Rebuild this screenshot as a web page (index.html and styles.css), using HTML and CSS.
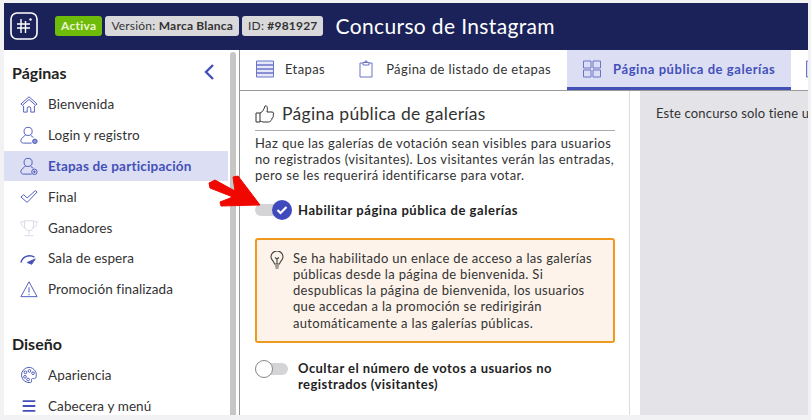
FILE: index.html
```html
<!DOCTYPE html>
<html lang="en">
<head>
    <meta charset="UTF-8">
    <meta name="viewport" content="width=device-width, initial-scale=1.0">
    <title>Concurso de Instagram</title>
    <link rel="stylesheet" href="styles.css">
</head>
<body>
    <div class="top-bar">
        <svg class="logo" width="28" height="28" viewBox="0 0 28 28" fill="none" stroke="#fff">
            <rect x="1" y="1" width="26" height="26" rx="6" stroke-width="1.6"/>
            <path d="M11 7v14M15.500 9v12M7 12h13M7 16h13" stroke-width="1.4"/>
            <circle cx="20.500" cy="7.500" r="1.200" fill="#fff" stroke="none"/>
        </svg>
        <span class="tag tag-green">Activa</span>
        <span class="tag">Versión: <b>Marca Blanca</b></span>
        <span class="tag">ID: <b>#981927</b></span>
        <span class="top-title">Concurso de Instagram</span>
    </div>
    <div class="main">
        <div class="sidebar">
            <div class="side-head">
                <span>Páginas</span>
                <svg width="12" height="18" viewBox="0 0 12 18" fill="none" stroke="#4350b8" stroke-width="2.400"><path d="M10 2 3 9l7 7"/></svg>
            </div>
            <a class="side-item">
                <svg class="ico" viewBox="0 0 20 20"><path d="M10 2 1 10l1.500 1.500L10 5l7.500 6.500L19 10zM4 12v7h4v-4a2 2 0 0 1 4 0v4h4v-7"/></svg>
                Bienvenida
            </a>
            <a class="side-item">
                <svg class="ico" viewBox="0 0 20 20"><circle cx="9" cy="6" r="4.500"/><path d="M6 10c-1 2-5 3-5 6 0 2 1 3 3 3h9"/><path d="M12 10.500c1 1 2 1.500 3 2"/><circle cx="16.500" cy="17" r="2.500" fill="#8d95d8"/></svg>
                Login y registro
            </a>
            <a class="side-item side-active">
                <svg class="ico" viewBox="0 0 20 20"><circle cx="9" cy="6" r="4.500"/><path d="M6 10c-1 2-5 3-5 6 0 2 1 3 3 3h9"/><path d="M12 10.500c1 1 2 1.500 3 2"/><circle cx="16" cy="16.500" r="3"/><path d="M16 15v3M14.500 16.500h3"/></svg>
                Etapas de participación
            </a>
            <a class="side-item">
                <svg class="ico" viewBox="0 0 20 20"><path d="M1 10l3-2.500 4 3.500L17 3l2 1.500L8 16z"/></svg>
                Final
            </a>
            <a class="side-item">
                <svg class="ico ico-pale" viewBox="0 0 20 20"><path d="M5 2h10v6a5 5 0 0 1-10 0zM5 3H1c0 4 2 6 5 7M15 3h4c0 4-2 6-5 7M10 13v4M5 18.500h10"/></svg>
                Ganadores
            </a>
            <a class="side-item">
                <svg class="ico" viewBox="0 0 20 20"><path d="M1 15a10 10 0 0 1 15-6" stroke-width="1.600"/><path d="M8 15l9-4-4 6z" fill="#4350b8"/></svg>
                Sala de espera
            </a>
            <a class="side-item">
                <svg class="ico" viewBox="0 0 20 20"><path d="M10 2 1 18.500h18zM10 8v6M10 15.500v1.500"/></svg>
                Promoción finalizada
            </a>
            <div class="side-head side-head-second"><span>Diseño</span></div>
            <a class="side-item">
                <svg class="ico" viewBox="0 0 20 20"><path d="M10 1.500a8.500 8.500 0 1 0 2 16.800c2-.5 0-3 1-4s3 .5 4.500-1A8.500 8.500 0 0 0 10 1.500z"/><circle cx="6" cy="7" r="1.500"/><circle cx="10.500" cy="5.500" r="1.500"/><circle cx="14.500" cy="8" r="1.500"/><circle cx="5.500" cy="12" r="1.500"/><circle cx="9" cy="15" r="1.500"/></svg>
                Apariencia
            </a>
            <a class="side-item">
                <svg class="ico" viewBox="0 0 20 20"><path d="M3 4.500h14M3 10h14M3 15.500h14" stroke-width="2"/></svg>
                Cabecera y menú
            </a>
        </div>
        <div class="side-scroll"><div class="side-thumb"></div></div>
        <div class="content">
            <div class="tabs">
                <a class="tab tab-first">
                    <svg class="tab-ico" width="18" height="18" viewBox="0 0 18 18"><path d="M.5 1h17v4H.5zM.5 5h17v4H.5zM.5 9h17v4H.5zM.5 13h17v4H.5z" fill="#e6e8f8"/></svg>
                    Etapas
                </a>
                <a class="tab tab-second">
                    <svg class="tab-ico" width="14" height="18" viewBox="0 0 14 18"><path d="M4 3H1v14h12V3h-3M4 2.500h6V5H4zM6 1h2v1.500H6z"/></svg>
                    Página de listado de etapas
                </a>
                <a class="tab tab-active">
                    <svg class="tab-ico" width="18" height="18" viewBox="0 0 18 18"><path d="M.5 1h7.500v7H.5zM10 1h7.500v7H10zM.5 10h7.500v7H.5zM10 10h7.500v7H10z"/></svg>
                    Página pública de galerías
                </a>
                <a class="tab tab-cut">
                    <svg class="tab-ico" width="18" height="18" viewBox="0 0 18 18"><path d="M.5 1h17v16H.5z" fill="#dcdef4"/></svg>
                </a>
            </div>
            <div class="panels">
                <div class="panel">
                    <h2 class="panel-title">
                        <svg width="20" height="20" viewBox="0 0 20 20" fill="none" stroke="#333" stroke-width="1"><path d="M1 9h4v9H1zM5 9c3-1 4-4 5-7 2-1 3 1 2 6h5c2 0 2 2 1 3 1 1 0 3-1 3 0 2-1 3-2 3 0 1-1 1-2 1H8c-1 0-2-1-3-1"/></svg>
                        Página pública de galerías
                    </h2>
                    <p class="panel-text">Haz que las galerías de votación sean visibles para usuarios no registrados (visitantes). Los visitantes verán las entradas, pero se les requerirá identificarse para votar.</p>
                    <div class="switch-row switch-row-first">
                        <span class="switch switch-on">
                            <span class="knob">
                                <svg width="12" height="10" viewBox="0 0 12 10" fill="none" stroke="#fff" stroke-width="2.200"><path d="M1.500 5 4.500 8l6-6"/></svg>
                            </span>
                        </span>
                        <b>Habilitar página pública de galerías</b>
                    </div>
                    <div class="notice">
                        <svg class="notice-ico" width="14" height="19" viewBox="0 0 14 19" fill="none" stroke="#444" stroke-width="1.100"><path d="M4.500 13C4 10 1 9 1 6a6 6 0 0 1 12 0c0 3-3 4-3.500 7zM5 15h4M5.500 17h3M7 13V8L5 6.500M7 8l2-1.500"/></svg>
                        <p>Se ha habilitado un enlace de acceso a las galerías públicas desde la página de bienvenida. Si despublicas la página de bienvenida, los usuarios que accedan a la promoción se redirigirán automáticamente a las galerías públicas.</p>
                    </div>
                    <div class="switch-row switch-row-last">
                        <span class="switch"><span class="knob knob-off"></span></span>
                        <b>Ocultar el número de votos a usuarios no registrados (visitantes)</b>
                    </div>
                </div>
                <div class="panel-side"><div class="preview">Este concurso solo tiene una etapa</div></div>
            </div>
        </div>
    </div>
    <svg class="red-arrow" width="56" height="36" viewBox="0 0 56 36"><path d="M2 9 8 6 28 17 26 3 31 2 53 31 14 32 13 28 26 23 3 14z" fill="#f00800" stroke="#f00800" stroke-width="1" stroke-linejoin="round"/></svg>
</body>
</html>
```

FILE: styles.css
```css
* {
    box-sizing: border-box;
}
html, body {
    height: 100%;
}
body {
    margin: 0;
    padding: 3px 3px 5px 4px;
    background-color: #f2f2f4;
    color: #333;
    font-family: Lato, "Noto Sans", sans-serif;
    font-size: 13px;
    display: flex;
    flex-direction: column;
    overflow: hidden;
    position: relative;
}
.top-bar {
    height: 47px;
    flex: none;
    background-color: #1b225a;
    display: flex;
    align-items: center;
    padding-left: 6px;
    padding-bottom: 2px;
}
.logo {
    margin-right: 17px;
}
.tag {
    background-color: #d9d9dc;
    color: #333;
    height: 20px;
    line-height: 20px;
    border-radius: 3px;
    padding: 0 6px;
    margin-right: 3px;
    font-size: 12px;
    letter-spacing: .2px;
}
.tag-green {
    background-color: #6fbb0a;
    color: #e8f6d0;
    font-weight: bold;
    letter-spacing: .27px;
}
.top-title {
    color: #fff;
    font-size: 21px;
    letter-spacing: .36px;
    margin-left: 9px;
}
.main {
    flex: 1;
    display: flex;
    min-height: 0;
    background: #fff;
}
.sidebar {
    width: 224px;
    flex: none;
    overflow: hidden;
    padding-top: 11px;
}
.side-head {
    display: flex;
    justify-content: space-between;
    align-items: center;
    padding: 0 13px 0 8px;
    height: 22px;
    margin-bottom: 6px;
    font-size: 16px;
    font-weight: bold;
    color: #222;
}
.side-head-second {
    margin-top: 28px;
    margin-bottom: 5px;
}
.side-item {
    display: flex;
    align-items: center;
    height: 30.800px;
    padding-left: 16px;
    gap: 10px;
    font-size: 13.500px;
    letter-spacing: .1px;
    color: #333;
}
.side-active {
    background-color: #dcdef4;
    color: #4350b8;
    font-weight: bold;
    letter-spacing: .2px;
}
.ico {
    width: 18px;
    height: 18px;
    fill: none;
    stroke: #4350b8;
    stroke-width: 1;
    flex: none;
}
.ico-pale {
    stroke: #d5d7e4;
}
.side-scroll {
    width: 11px;
    flex: none;
    padding: 2px 2px 0;
}
.side-thumb {
    width: 6px;
    height: 100%;
    background-color: #c6c6c6;
    border-radius: 3px 3px 0 0;
}
.content {
    flex: 1;
    min-width: 0;
    display: flex;
    flex-direction: column;
    border-left: 1px solid #999;
}
.tabs {
    height: 41px;
    flex: none;
    display: flex;
    border-bottom: 1px solid #999;
    overflow: hidden;
    padding-left: 16px;
}
.tab {
    display: flex;
    align-items: center;
    padding-bottom: 3px;
    font-size: 13px;
    letter-spacing: .4px;
    white-space: nowrap;
    color: #333;
}
.tab-first {
    gap: 11px;
    padding-right: 34px;
}
.tab-second {
    gap: 13px;
    padding-right: 16px;
}
.tab-ico {
    fill: none;
    stroke: #6a74c8;
    stroke-width: 1;
    flex: none;
}
.tab-active {
    background-color: #dcdef4;
    border-bottom: 3px solid #4350b8;
    color: #4350b8;
    font-weight: bold;
    letter-spacing: .55px;
    gap: 12px;
    padding: 0 16px;
    height: 40px;
}
.tab-cut {
    padding: 0 0 3px 15px;
}
.panels {
    flex: 1;
    display: flex;
    min-height: 0;
}
.panel {
    width: 390px;
    flex: none;
    padding: 12px 14px 0 15px;
    border-right: 1px solid #ddd;
    overflow: hidden;
}
.panel-title {
    margin: 0;
    padding-bottom: 6px;
    border-bottom: 1px solid #aaa;
    font-size: 17.500px;
    font-weight: normal;
    letter-spacing: .3px;
    color: #333;
    display: flex;
    align-items: center;
    gap: 7px;
}
.panel-text {
    margin: 4px 0 0;
    font-size: 13px;
    line-height: 16.200px;
    letter-spacing: .37px;
}
.switch-row {
    display: flex;
    gap: 10px;
    font-size: 13px;
    line-height: 16.200px;
    letter-spacing: .55px;
    color: #222;
}
.switch-row-first {
    align-items: center;
    gap: 6px;
    margin-top: 18px;
    margin-bottom: 20px;
}
.switch-row-last {
    align-items: flex-start;
    margin-top: 17px;
    letter-spacing: .45px;
}
.switch {
    width: 33px;
    height: 12px;
    flex: none;
    background-color: #d4d4d6;
    border-radius: 6px;
    position: relative;
}
.switch-on {
    width: 37px;
}
.switch-row-last .switch {
    margin-top: 3px;
}
.knob {
    position: absolute;
    top: -4px;
    right: 0;
    width: 20px;
    height: 20px;
    border-radius: 50%;
    background-color: #3f4bbd;
    display: flex;
    align-items: center;
    justify-content: center;
}
.knob-off {
    left: 0;
    right: auto;
    top: -3px;
    width: 18px;
    height: 18px;
    background-color: #fff;
    border: 1px solid #888;
}
.notice {
    display: flex;
    gap: 9px;
    background-color: #fdf3ea;
    border: 2px solid #ef9a1c;
    border-radius: 3px;
    padding: 10px 12px 10px 13px;
}
.notice-ico {
    flex: none;
    margin-top: 1px;
}
.notice p {
    margin: 0;
    font-size: 13px;
    line-height: 16.200px;
    letter-spacing: .33px;
}
.panel-side {
    flex: 1;
    min-width: 0;
    padding-left: 10px;
}
.preview {
    height: 100%;
    background-color: #e4e4e8;
    padding: 14px 16px;
    white-space: nowrap;
    overflow: hidden;
    font-size: 13px;
    letter-spacing: .15px;
}
.red-arrow {
    position: absolute;
    left: 207px;
    top: 174px;
}
```
